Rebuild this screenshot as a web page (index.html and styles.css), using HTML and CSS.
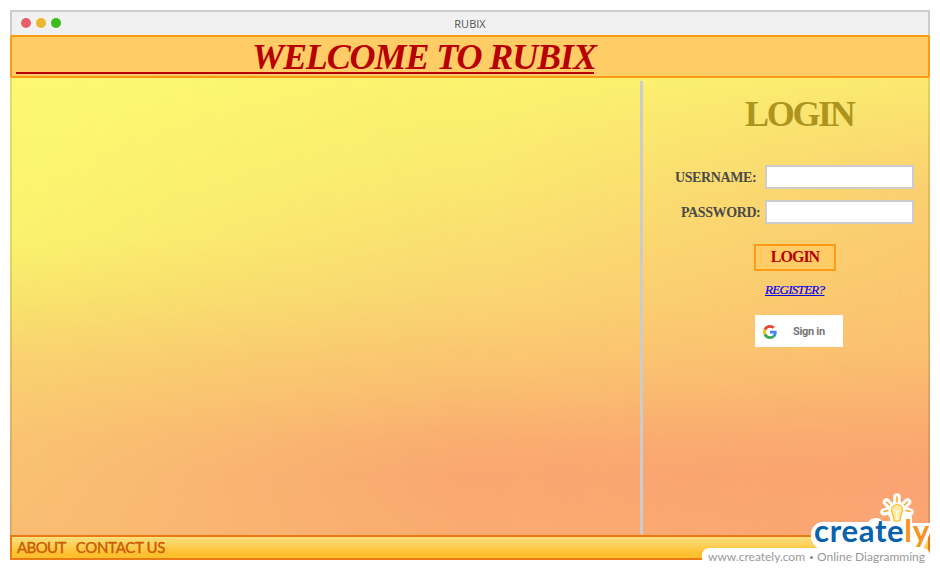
FILE: index.html
```
<!DOCTYPE html>
<html lang="en">
<head>
<meta charset="utf-8">
<title>RUBIX</title>
<link rel="stylesheet" href="styles.css">
</head>
<body>
<div class="window">
  <header class="titlebar">
    <div class="dots"><i class="dot red"></i><i class="dot amber"></i><i class="dot green"></i></div>
    <span class="caption">RUBIX</span>
  </header>
  <div class="banner"><h1>WELCOME TO RUBIX</h1></div>
  <main class="stage">
    <div class="wash wash-mid"></div>
    <div class="wash wash-left"></div>
    <div class="wash edges"></div>
    <section class="hero"></section>
    <section class="login">
      <h2>LOGIN</h2>
      <form class="form">
        <label class="field"><span class="name user">USERNAME:</span><input type="text"></label>
        <label class="field"><span class="name pass">PASSWORD:</span><input type="password"></label>
        <button type="button" class="submit"><span>LOGIN</span></button>
        <a class="register" href="#">REGISTER?</a>
        <button type="button" class="google">
          <svg width="14" height="14" viewBox="0 0 48 48"><path fill="#ea4335" d="M24 9.5c3.54 0 6.71 1.22 9.21 3.6l6.85-6.85C35.9 2.38 30.47 0 24 0 14.62 0 6.51 5.38 2.56 13.22l7.98 6.19C12.43 13.72 17.74 9.5 24 9.5z"/><path fill="#4285f4" d="M46.98 24.55c0-1.57-.15-3.09-.38-4.55H24v9.02h12.94c-.58 2.96-2.26 5.48-4.78 7.18l7.73 6c4.51-4.18 7.09-10.36 7.09-17.65z"/><path fill="#fbbc05" d="M10.53 28.59A14.5 14.5 0 0 1 9.77 24c0-1.6.27-3.14.76-4.59l-7.98-6.19A23.9 23.9 0 0 0 0 24c0 3.88.92 7.54 2.56 10.78l7.97-6.19z"/><path fill="#34a853" d="M24 48c6.48 0 11.93-2.13 15.89-5.81l-7.73-6c-2.15 1.45-4.92 2.3-8.16 2.3-6.26 0-11.57-4.22-13.47-9.91l-7.98 6.19C6.51 42.62 14.62 48 24 48z"/></svg>
          <span>Sign in</span>
        </button>
      </form>
    </section>
  </main>
  <footer class="footer"><a class="about">ABOUT</a><a>CONTACT US</a></footer>
</div>
<svg class="brand" width="230" height="80" viewBox="700 490 230 80">
  <path class="plate" d="M702 570V556q0-8 8-8H922q8 0 8 8V570z"/>
  <path class="plate" d="M820 549C813 546 810 540 811 533C812 526 818 521 826 522L868 522Q871 518 876 518Q880 518 882 521L891 521L892 514H904Q911 511 912 518V523H930V533L922 552H820z"/>
  <g class="halo">
    <path d="M897 502v-5M888.800 504.500l-2.300-2.500M905.200 504.500l2.300-2.500M887.500 511l-3.500 1M906.500 511l3.500 1"/>
    <circle cx="897" cy="511" r="6"/>
    <path d="M894 516h6v7h-6z"/>
  </g>
  <g class="rays"><path d="M897 502v-5M889.500 505l-3-3M904.500 505l3-3M888 510.500l-4 1M906 510.500l4 1"/></g>
  <text class="word" x="814" y="542" textLength="115">create<tspan class="ly">ly</tspan></text>
  <path class="bulb" d="M894 521C894 515 891.500 514 891.500 510a5.500 5.500 0 0 1 11 0C902.500 514 900 515 900 521z"/>
  <path class="filament" d="M894.500 510l2.500 2 2.500-2M897 512v8"/>
  <text class="tag" x="708" y="561" textLength="97">www.creately.com</text>
  <circle class="sep" cx="811.500" cy="557.500" r="1.500"/>
  <text class="tag" x="817" y="561" textLength="108">Online Diagramming</text>
</svg>
</body>
</html>
```
FILE: styles.css
```
* { box-sizing: border-box; }
body { margin: 0; padding: 10px; width: 940px; height: 570px; overflow: hidden; background: #fff; position: relative; font-family: Lato, sans-serif; }
.window { width: 920px; height: 550px; display: flex; flex-direction: column; }
.titlebar { height: 25px; flex: none; display: grid; grid-template-columns: 1fr auto 1fr; align-items: center; background: #f1f1f1; border: 2px solid #ccc; border-bottom: 0; border-radius: 2px 2px 0 0; }
.dots { display: flex; gap: 5px; padding: 0 0 1px 9px; }
.dot { width: 10px; height: 10px; border-radius: 50%; }
.red { background: #ea5f67; }
.amber { background: #ecb52f; }
.green { background: #3bbd1b; }
.caption { font: 11px "Open Sans", sans-serif; color: #555; padding-bottom: 1px; }
.banner { height: 43px; flex: none; background: #ffcc66; border: 2px solid #ff9a14; border-radius: 1px; padding-left: 4px; }
.banner h1 { margin: 0; width: 578px; height: 37px; padding-left: 236px; border-bottom: 2px solid #b80000; color: #b80000; font: italic bold 36px/41px "Liberation Serif", serif; letter-spacing: -1.1px; white-space: nowrap; }
.stage { position: relative; isolation: isolate; height: 457px; flex: none; display: flex; padding: 0 2px; background: linear-gradient(#fbea70 0, #fbe070 9%, #fbcf70 25%, #fbc870 42%, #fbc070 60%, #faae70 75%, #faa371 86%, #fba675 100%); }
.wash { position: absolute; inset: 0; z-index: -1; }
.wash-mid { background: linear-gradient(#fbf36f 0, #fae970 22%, #fad572 48%, #fabe70 68%, #faad70 79%, #f9a770 87%, #faab70 100%); -webkit-mask-image: linear-gradient(90deg, #000 50%, transparent); mask-image: linear-gradient(90deg, #000 50%, transparent); }
.wash-left { background: linear-gradient(#fcf971 0, #faf26e 35%, #f8e46c 48%, #f9d270 61%, #f9c372 79%, #f9bd72 100%); -webkit-mask-image: linear-gradient(90deg, #000, transparent 50%); mask-image: linear-gradient(90deg, #000, transparent 50%); }
.edges { border: 2px solid rgba(0,0,0,.1); border-width: 0 2px; }
.hero { width: 628px; flex: none; }
.login { flex: 1; margin: 3px 0 0; height: 453px; border-left: 3px solid #ccc; font-family: "Liberation Serif", serif; padding-left: 23px; }
.login h2 { margin: 13px 0 0 79px; font-size: 36px; line-height: 40px; letter-spacing: -2.3px; color: #ac941f; }
.form { margin-top: 31px; display: flex; flex-direction: column; align-items: flex-start; }
.field { display: flex; align-items: center; height: 24px; margin-bottom: 11px; }
.name { width: 99px; font-weight: bold; font-size: 14px; letter-spacing: -.4px; color: #4a4a4a; white-space: nowrap; padding: 2px 0 0 9px; }
.pass { padding-left: 15px; }
.field input { width: 149px; height: 24px; border: 2px solid #ccc; background: #fff; padding: 2px 4px; outline: 0; }
.submit { width: 82px; height: 27px; margin: 9px 0 0 88px; padding: 0 0 2px; border: 2px solid #ff9a14; background: #ffcc66; color: #b80000; font: bold 16px "Liberation Serif", serif; letter-spacing: -1px; }
.register { margin: 11px 0 0 99px; font-size: 13px; line-height: 15px; font-style: italic; letter-spacing: -.7px; color: #00f; text-decoration: underline; -webkit-text-stroke: .2px #00d; }
.google { width: 88px; height: 32px; margin: 18px 0 0 89px; padding: 1px 0 0 8px; border: 0; background: #fff; display: flex; align-items: center; gap: 16px; font: bold 11px Roboto, sans-serif; letter-spacing: -.3px; color: #757575; }
.footer { height: 25px; flex: none; border: 2px solid #ec7a14; background: linear-gradient(#fbe080, #ffc02e 80%); color: #cb5a05; font-size: 15px; line-height: 21px; letter-spacing: -.3px; -webkit-text-stroke: .4px #cb5a05; display: flex; gap: 10px; padding-left: 5px; }
.about { letter-spacing: -.6px; }
.brand { position: absolute; left: 700px; top: 490px; }
.plate { fill: #fff; }
.halo { fill: #fff; stroke: #fff; stroke-width: 7.5; stroke-linecap: round; stroke-linejoin: round; }
.word { font: bold 31px Lato, sans-serif; fill: #0862ae; }
.ly { fill: #f79322; }
.rays { fill: none; stroke: #f3a62b; stroke-width: 1.5; stroke-linecap: round; }
.bulb { fill: #ffeaa0; stroke: #f6bd32; stroke-width: 1.2; }
.filament { fill: none; stroke: #fff; stroke-width: 1; }
.tag { font: 12px Lato, sans-serif; fill: #999; }
.sep { fill: #888; }
```
